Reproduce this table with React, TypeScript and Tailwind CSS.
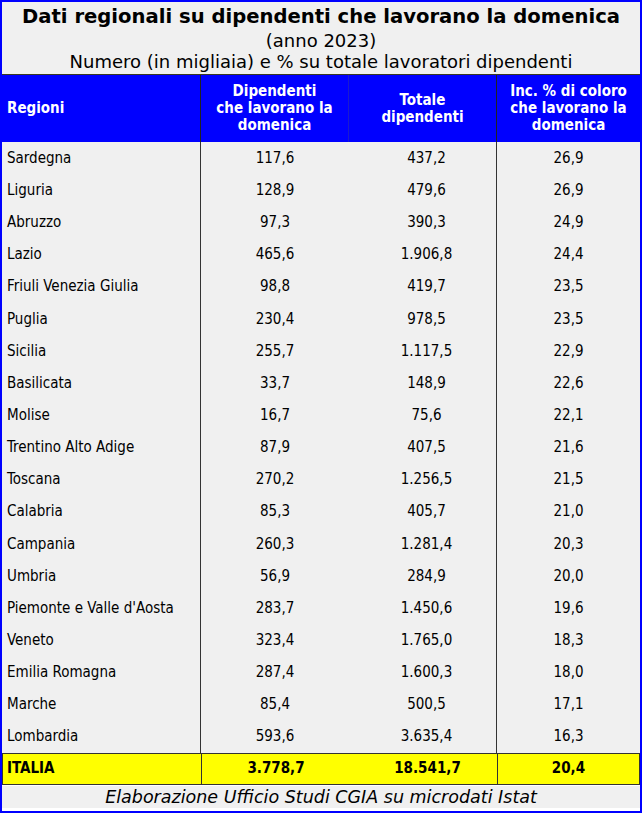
const ROWS: [string, string, string, string][] = [
  ['Sardegna', '117,6', '437,2', '26,9'],
  ['Liguria', '128,9', '479,6', '26,9'],
  ['Abruzzo', '97,3', '390,3', '24,9'],
  ['Lazio', '465,6', '1.906,8', '24,4'],
  ['Friuli Venezia Giulia', '98,8', '419,7', '23,5'],
  ['Puglia', '230,4', '978,5', '23,5'],
  ['Sicilia', '255,7', '1.117,5', '22,9'],
  ['Basilicata', '33,7', '148,9', '22,6'],
  ['Molise', '16,7', '75,6', '22,1'],
  ['Trentino Alto Adige', '87,9', '407,5', '21,6'],
  ['Toscana', '270,2', '1.256,5', '21,5'],
  ['Calabria', '85,3', '405,7', '21,0'],
  ['Campania', '260,3', '1.281,4', '20,3'],
  ['Umbria', '56,9', '284,9', '20,0'],
  ["Piemonte e Valle d'Aosta", '283,7', '1.450,6', '19,6'],
  ['Veneto', '323,4', '1.765,0', '18,3'],
  ['Emilia Romagna', '287,4', '1.600,3', '18,0'],
  ['Marche', '85,4', '500,5', '17,1'],
  ['Lombardia', '593,6', '3.635,4', '16,3'],
];

const FONT = "font-['DejaVu_Sans_Condensed','DejaVu_Sans',sans-serif]";
const WIDE = "font-['DejaVu_Sans',sans-serif]";
const COLS = 'grid grid-cols-[199px_148px_148px_1fr]';

export default function App() {
  return (
    <div className={`h-[813px] w-[642px] border-2 border-[#0000ff] bg-white ${FONT} text-black`}>
      <div className={`flex h-[72px] flex-col items-center bg-[#f0f0f0] pt-[5px] leading-none ${WIDE}`}>
        <div className="text-[19.6px] font-bold">Dati regionali su dipendenti che lavorano la domenica</div>
        <div className="mt-[5px] text-[18px]">(anno 2023)</div>
        <div className="mt-[3px] text-[18px]">Numero (in migliaia) e % su totale lavoratori dipendenti</div>
      </div>

      <div className={`${COLS} h-[68px] border-t border-[#3a3a20] bg-[#0000ff] text-[15px] font-bold leading-[17px] text-white`}>
        <div className="flex items-center border-r border-[#222] pl-[5px]">Regioni</div>
        <div className="flex items-center justify-center border-r border-[#1a1ad0] text-center">
          Dipendenti<br />che lavorano la<br />domenica
        </div>
        <div className="flex items-center justify-center border-r border-[#222] text-center">
          Totale<br />dipendenti
        </div>
        <div className="flex items-center justify-center text-center">
          Inc. % di coloro<br />che lavorano la<br />domenica
        </div>
      </div>

      {ROWS.map(([r, a, b, c]) => (
        <div key={r} className={`${COLS} h-[32.15px] bg-[#f0f0f0] text-[15px]`}>
          <div className="flex items-center border-r border-[#333] pl-[5px]">{r}</div>
          <div className="flex items-center justify-center">{a}</div>
          <div className="flex items-center justify-center border-r border-[#333] pl-[8px]">{b}</div>
          <div className="flex items-center justify-center">{c}</div>
        </div>
      ))}

      <div className={`${COLS} h-[32px] border border-[#333] bg-[#ffff00] text-[15px] font-bold`}>
        <div className="flex items-center border-r border-[#333] pl-[4px]">ITALIA</div>
        <div className="flex items-center justify-center">3.778,7</div>
        <div className="flex items-center justify-center border-r border-[#333] pl-[8px]">18.541,7</div>
        <div className="flex items-center justify-center">20,4</div>
      </div>

      <div className={`mt-[1px] flex h-[22px] items-center justify-center bg-[#f0f0f0] text-[17.5px] italic ${WIDE}`}>
        Elaborazione Ufficio Studi CGIA su microdati Istat
      </div>
    </div>
  );
}
